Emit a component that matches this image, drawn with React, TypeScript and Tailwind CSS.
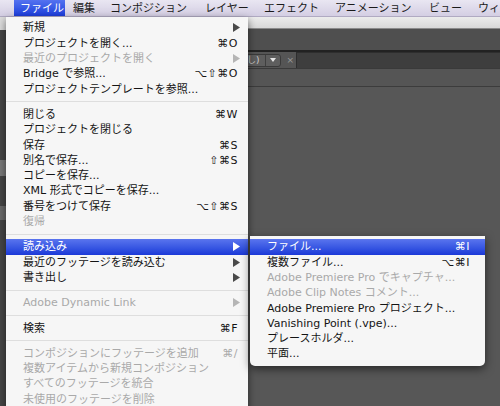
import React from "react";

type Item =
  | { sep: true }
  | {
      sep?: false;
      label: string;
      sc?: string;
      arrow?: boolean;
      disabled?: boolean;
      hl?: boolean;
    };

const mainItems: Item[] = [
  { label: "新規", arrow: true },
  { label: "プロジェクトを開く...", sc: "⌘O" },
  { label: "最近のプロジェクトを開く", arrow: true, disabled: true },
  { label: "Bridge で参照...", sc: "⌥⇧⌘O" },
  { label: "プロジェクトテンプレートを参照..." },
  { sep: true },
  { label: "閉じる", sc: "⌘W" },
  { label: "プロジェクトを閉じる" },
  { label: "保存", sc: "⌘S" },
  { label: "別名で保存...", sc: "⇧⌘S" },
  { label: "コピーを保存..." },
  { label: "XML 形式でコピーを保存..." },
  { label: "番号をつけて保存", sc: "⌥⇧⌘S" },
  { label: "復帰", disabled: true },
  { sep: true },
  { label: "読み込み", arrow: true, hl: true },
  { label: "最近のフッテージを読み込む", arrow: true },
  { label: "書き出し", arrow: true },
  { sep: true },
  { label: "Adobe Dynamic Link", arrow: true, disabled: true },
  { sep: true },
  { label: "検索", sc: "⌘F" },
  { sep: true },
  { label: "コンポジションにフッテージを追加", sc: "⌘/", disabled: true },
  { label: "複数アイテムから新規コンポジション", disabled: true },
  { label: "すべてのフッテージを統合", disabled: true },
  { label: "未使用のフッテージを削除", disabled: true },
];

const subItems: Item[] = [
  { label: "ファイル...", sc: "⌘I", hl: true },
  { label: "複数ファイル...", sc: "⌥⌘I" },
  { label: "Adobe Premiere Pro でキャプチャ...", disabled: true },
  { label: "Adobe Clip Notes コメント...", disabled: true },
  { label: "Adobe Premiere Pro プロジェクト..." },
  { label: "Vanishing Point (.vpe)..." },
  { label: "プレースホルダ..." },
  { label: "平面..." },
];

function Arrow({ color }: { color: string }) {
  return (
    <svg width="7" height="9" viewBox="0 0 7 9" className="-mr-[2px] shrink-0">
      <polygon points="0,0 7,4.5 0,9" fill={color} />
    </svg>
  );
}

function Row({ item, sub }: { item: Item; sub?: boolean }) {
  if (item.sep) {
    return (
      <div className="h-[10px] flex items-center">
        <div className="h-px w-full bg-[#dedede]" />
      </div>
    );
  }
  const color = item.hl
    ? "bg-linear-to-b from-[#5a74ee] to-[#1c38d8] text-white"
    : item.disabled
    ? "text-[#a9a9a9]"
    : "text-[#141414]";
  const arrowColor = item.hl ? "#ffffff" : item.disabled ? "#b5b5b5" : "#4a4a4a";
  return (
    <div
      className={`flex items-center h-[15.3px] leading-none whitespace-nowrap ${
        sub ? "pl-[17px] pr-[15px]" : "pl-[17px] pr-[10px]"
      } ${color}`}
    >
      <span className="flex-1">{item.label}</span>
      {item.sc && <span className="tracking-[0.5px]">{item.sc}</span>}
      {item.arrow && <Arrow color={arrowColor} />}
    </div>
  );
}

const bar = [
  { t: "ファイル", w: "w-[51px] pl-[6px]", hl: true },
  { t: "編集", w: "w-[37px] pl-[8px]" },
  { t: "コンポジション", w: "w-[95px] pl-[8px]" },
  { t: "レイヤー", w: "w-[59px] pl-[8px]" },
  { t: "エフェクト", w: "w-[71px] pl-[8px]" },
  { t: "アニメーション", w: "w-[94px] pl-[8px]" },
  { t: "ビュー", w: "w-[49px] pl-[8px]" },
  { t: "ウィンドウ", w: "w-[60px] pl-[8px]" },
];

export default function App() {
  return (
    <div className="relative w-[500px] h-[406px] overflow-hidden bg-[#575757] text-[11px] font-['DejaVu_Sans','Noto_Sans_CJK_JP',sans-serif]">
      {/* menu bar */}
      <div className="h-[17px] flex items-stretch pl-[14px] bg-linear-to-b from-[#e9e6f2] to-[#d4cee3] border-b border-[#b0aac2] overflow-hidden">
        {bar.map((b) => (
          <div
            key={b.t}
            className={`${b.w} shrink-0 flex items-center whitespace-nowrap leading-none ${
              b.hl
                ? "bg-linear-to-b from-[#5472f0] to-[#1d3cdb] text-white"
                : "text-[#1a1a1a]"
            }`}
          >
            {b.t}
          </div>
        ))}
      </div>

      {/* application window behind */}
      <div className="h-[12px] bg-linear-to-b from-[#ececec] to-[#d8d8d8] border-b border-[#8a8a8a]" />
      <div className="h-[21px] bg-[#4f4f4f]" />
      <div className="h-[2px] bg-[#222222]" />
      <div className="h-[16px] flex bg-[#4a4a4a]">
        <div className="w-[296px] shrink-0 flex items-center justify-end pr-[2px] bg-[#555555]">
          <div className="flex items-center h-[13px] rounded-[3px] border border-[#3a3a3a] bg-[#5e5e5e] text-[9px] text-[#cfcfcf] leading-none">
            <span className="pl-[4px] pr-[6px]">(なし)</span>
            <div className="w-px h-full bg-[#3f3f3f]" />
            <svg width="14" height="8" viewBox="0 0 14 8">
              <polygon points="4,2 10,2 7,6" fill="#e6e6e6" />
            </svg>
          </div>
          <span className="ml-[5px] text-[9px] text-[#9a9a9a] leading-none">×</span>
        </div>
        <div className="flex-1 bg-[#3e3e3e] border-t border-l border-[#2e2e2e]" />
      </div>
      <div className="h-px bg-[#3a3a3a]" />
      <div className="h-[18px] bg-[#555555] border-b border-[#3c3c3c]" />
      <div className="flex h-[300px]">
        <div className="w-[6px] bg-[#4a4a4a]" />
      </div>

      {/* left strip details behind the menu */}
      <div className="absolute left-0 top-[17px] w-[6px] h-[389px] bg-[#464646] flex flex-col">
        <div className="h-[13px] bg-[#dcdcdc]" />
        <div className="h-[130px]" />
        <div className="h-[16px] bg-[#7a7a7a]" />
        <div className="h-[30px]" />
        <div className="h-[14px] bg-[#6a6a6a]" />
      </div>

      {/* main menu */}
      <div className="absolute left-[6px] top-[17px] w-[242px] pt-[3.35px] pb-[6px] bg-[#f6f6f6] shadow-[0_3px_8px_rgba(0,0,0,0.55)]">
        {mainItems.map((it, i) => (
          <Row key={i} item={it} />
        ))}
      </div>

      {/* submenu */}
      <div className="absolute left-[250px] top-[236px] w-[235px] pt-[3.25px] pb-[4px] bg-[#f6f6f6] rounded-b-[5px] shadow-[0_3px_10px_rgba(0,0,0,0.55)]">
        {subItems.map((it, i) => (
          <Row key={i} item={it} sub />
        ))}
      </div>
    </div>
  );
}
